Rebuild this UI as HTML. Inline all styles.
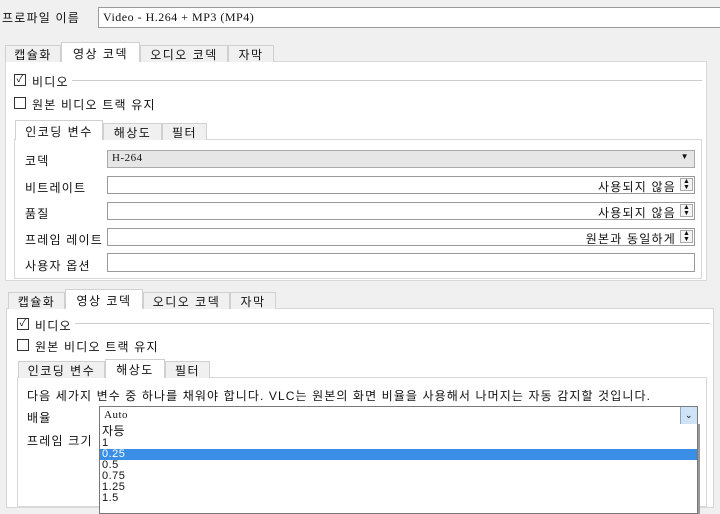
<!DOCTYPE html><html><head><meta charset="utf-8"><style>
body{margin:0;width:720px;height:503px;background:#f0f0f0;position:relative;overflow:hidden;font-family:"Liberation Sans","Noto Sans CJK KR","NanumGothic",sans-serif;font-size:12px;color:#111;letter-spacing:1.2px}
.a{position:absolute;white-space:nowrap}
.box{position:absolute;background:#fff;border:1px solid #9a9a9a;box-sizing:border-box;white-space:nowrap}
.tab{position:absolute;border:1px solid #d0d0d0;border-bottom:none;background:#f0f0f0;box-sizing:border-box;text-align:center;font-size:12px;letter-spacing:1.5px}
.tab.s{background:#fff}
.cb{position:absolute;width:12px;height:12px;border:1px solid #333;background:#fff;box-sizing:border-box;font-size:10px;line-height:10px;text-align:center;letter-spacing:0}
.spin{position:absolute;right:1px;top:1px;width:13px;height:13px;border:1px solid #aaa;background:#f4f4f4;font-size:7px;line-height:6px;text-align:center;box-sizing:border-box;letter-spacing:0}
.mono{font-family:"Liberation Serif",serif;letter-spacing:0.5px}
.it{position:absolute;left:2px;font-size:11px;line-height:11px;letter-spacing:0.5px}
</style></head><body>
<div class="a" style="left:2px;top:9px">프로파일 이름</div>
<div class="box mono" style="left:98px;top:7px;width:630px;height:21px;padding:2px 4px;font-size:12px">Video - H.264 + MP3 (MP4)</div>
<div class="box" style="left:5px;top:61px;width:702px;height:220px;border-color:#d8d8d8"></div>
<div class="tab" style="left:5px;top:45px;width:56px;height:17px">캡슐화</div>
<div class="tab s" style="left:61px;top:42px;width:79px;height:20px;padding-top:2px">영상 코덱</div>
<div class="tab" style="left:140px;top:45px;width:88px;height:17px">오디오 코덱</div>
<div class="tab" style="left:228px;top:45px;width:46px;height:17px">자막</div>
<div class="cb" style="left:14px;top:74px">✓</div><div class="a" style="left:32px;top:73px">비디오</div>
<div style="position:absolute;left:72px;top:80px;width:630px;height:1px;background:#ccc"></div>
<div class="cb" style="left:14px;top:97px"></div><div class="a" style="left:32px;top:96px">원본 비디오 트랙 유지</div>
<div class="box" style="left:14px;top:139px;width:688px;height:140px;border-color:#d8d8d8"></div>
<div class="tab s" style="left:15px;top:120px;width:88px;height:20px;padding-top:2px">인코딩 변수</div>
<div class="tab" style="left:103px;top:123px;width:59px;height:17px">해상도</div>
<div class="tab" style="left:162px;top:123px;width:45px;height:17px">필터</div>
<div class="a" style="left:25px;top:152px">코덱</div>
<div class="box mono" style="left:107px;top:150px;width:588px;height:18px;background:#e6e6e6;border-color:#aaa;font-size:11px;padding:1px 4px">H-264<span style="position:absolute;right:5px;top:1px;font-size:8px">▼</span></div>
<div class="a" style="left:25px;top:179px">비트레이트</div>
<div class="box" style="left:107px;top:176px;width:588px;height:18px;text-align:right;padding:1px 18px 0 0">사용되지 않음<div class="spin">▲<br>▼</div></div>
<div class="a" style="left:25px;top:205px">품질</div>
<div class="box" style="left:107px;top:202px;width:588px;height:18px;text-align:right;padding:1px 18px 0 0">사용되지 않음<div class="spin">▲<br>▼</div></div>
<div class="a" style="left:25px;top:231px">프레임 레이트</div>
<div class="box" style="left:107px;top:228px;width:588px;height:18px;text-align:right;padding:1px 18px 0 0">원본과 동일하게<div class="spin">▲<br>▼</div></div>
<div class="a" style="left:25px;top:257px">사용자 옵션</div>
<div class="box" style="left:107px;top:253px;width:588px;height:19px"></div>

<div class="box" style="left:6px;top:308px;width:708px;height:200px;border-color:#d8d8d8"></div>
<div class="tab" style="left:8px;top:292px;width:57px;height:17px">캡슐화</div>
<div class="tab s" style="left:65px;top:289px;width:78px;height:20px;padding-top:2px">영상 코덱</div>
<div class="tab" style="left:143px;top:292px;width:87px;height:17px">오디오 코덱</div>
<div class="tab" style="left:230px;top:292px;width:46px;height:17px">자막</div>
<div class="cb" style="left:17px;top:318px">✓</div><div class="a" style="left:35px;top:317px">비디오</div>
<div style="position:absolute;left:75px;top:323px;width:635px;height:1px;background:#ccc"></div>
<div class="cb" style="left:17px;top:339px"></div><div class="a" style="left:35px;top:338px">원본 비디오 트랙 유지</div>
<div class="box" style="left:17px;top:377px;width:690px;height:130px;border-color:#d8d8d8"></div>
<div class="tab" style="left:18px;top:361px;width:87px;height:17px">인코딩 변수</div>
<div class="tab s" style="left:105px;top:359px;width:60px;height:19px;padding-top:1px">해상도</div>
<div class="tab" style="left:165px;top:361px;width:45px;height:17px">필터</div>
<div class="a" style="left:27px;top:387px;letter-spacing:1.1px">다음 세가지 변수 중 하나를 채워야 합니다. VLC는 원본의 화면 비율을 사용해서 나머지는 자동 감지할 것입니다.</div>
<div class="a" style="left:27px;top:409px">배율</div>
<div class="a" style="left:27px;top:432px">프레임 크기</div>
<div class="box mono" style="left:99px;top:406px;width:599px;height:19px;border-color:#7a7a7a;font-size:11px;padding:2px 4px">Auto<div style="position:absolute;right:0;top:0;width:16px;height:17px;background:#cfe3f7;border-left:1px solid #8ab;font-size:9px;text-align:center;line-height:16px">⌄</div></div>
<div class="box" style="left:99px;top:424px;width:599px;height:90px;border-color:#777;border-top:none;box-shadow:2px 0 0 #999">
<div class="it" style="top:2px;font-size:12px">자등</div>
<div class="it" style="top:14px">1</div>
<div style="position:absolute;left:0;right:0;top:25px;height:11px;background:#3a8ee6"></div>
<div class="it" style="top:25px;color:#fff">0.25</div>
<div class="it" style="top:36px">0.5</div>
<div class="it" style="top:47px">0.75</div>
<div class="it" style="top:58px">1.25</div>
<div class="it" style="top:69px">1.5</div>
</div>
</body></html>
